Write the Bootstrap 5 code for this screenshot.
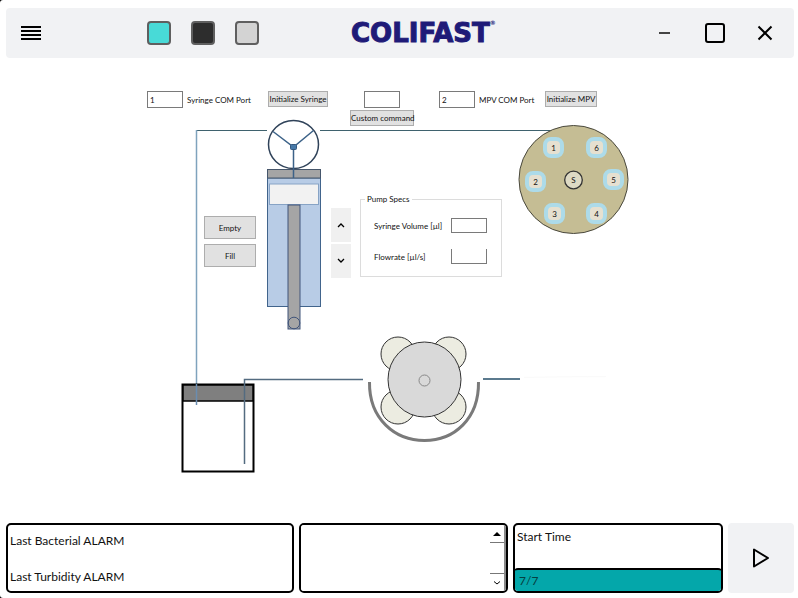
<!DOCTYPE html>
<html lang="en">
<head>
<meta charset="utf-8">
<meta name="viewport" content="width=device-width, initial-scale=1">
<title>Colifast</title>
<link href="https://cdn.jsdelivr.net/npm/bootstrap@5.3.0/dist/css/bootstrap.min.css" rel="stylesheet">
<style>
body { background: #000; font-family: Lato, "Open Sans", sans-serif; font-size: 12px; line-height: 16px; color: #111; }
.app-shell { background: #fff; border-radius: 3px 0 0 3px; padding: 8px 4px 5px 6px; }
.titlebar { background: #f1f2f4; border-radius: 4px; height: 50px; padding: 0 21px 0 15px; }
.bare { border: 0; background: none; padding: 0; display: flex; align-items: center; justify-content: center; color: #000; }
.swatches { gap: 20px; margin-left: 106px; }
.swatch { width: 24px; height: 24px; border: 2px solid #5f5f5f; border-radius: 4px; padding: 0; }
.swatch-teal { background: #48dad7; }
.swatch-dark { background: #2d2d2d; }
.swatch-light { background: #d3d3d3; }
.brand { margin-left: 92px; color: #1f1b78; font: bold 26px/30px "DejaVu Sans", sans-serif; -webkit-text-stroke: 1px #1f1b78; }
.brand sup { font-size: 6px; top: -17px; -webkit-text-stroke: 0; }
.win-controls { gap: 32px; }
.stage { width: 504px; height: 424px; left: -1px; font-family: Lato, sans-serif; font-size: 8px; line-height: 10px; }
.ports { display: grid; grid-template-columns: 121px 82px 89px 106px auto; align-items: start; padding-top: 33px; }
.tiny-input { width: 36px; height: 17px; border: 1px solid #7a7a7a; border-radius: 0; padding: 0 2px; font-size: 8px; background: #fff; color: #111; }
.tiny-btn { border: 1px solid #adadad; background: #e1e1e1; padding: 0; font-size: 8px; line-height: 10px; height: 16px; color: #111; white-space: nowrap; }
.w-mpv { width: 52px; }
.w-syr { width: 60px; }
.w-cmd { width: 64px; margin-top: 2px; }
.port-label { margin-left: 4px; white-space: nowrap; }
.cmd-cell { width: 64px; }
.move-btns { left: 57px; top: 158px; width: 52px; gap: 5px; }
.move-btns .tiny-btn { height: 23px; }
.step-btns { left: 184px; top: 150px; width: 20px; gap: 2px; }
.step-btns button { height: 34px; background: #f0f0f0; }
.specs { left: 213px; top: 136px; width: 142px; }
.specs legend { float: none; width: auto; font-size: 8px; line-height: 10px; margin: 0 0 0 -9px; padding: 0 2px; }
.specs fieldset { border: 1px solid #dcdcdc; padding: 14px 14px 12px 13px; min-width: 0; }
.specs .spec-rows { gap: 16px; }
.specs .tiny-input { height: 15px; }
.valve-port { width: 21px; height: 21px; border: 4px solid #addbe9; border-radius: 8px; background: #e6e0d0; font-size: 8px; line-height: 10px; padding: 0; color: #111; }
.vp1 { left: 396px; top: 79px; } .vp6 { left: 439px; top: 79px; }
.vp2 { left: 378px; top: 113px; } .vp5 { left: 456px; top: 111px; }
.vp3 { left: 397px; top: 145px; } .vp4 { left: 439px; top: 145px; }
.status { gap: 5px; height: 70px; }
.panel { border: 2px solid #000; border-radius: 5px; background: #fff; overflow: hidden; min-width: 0; }
.panel-alarm { flex: 280 1 0; padding: 8px 2px 6px; }
.panel-log { flex: 205 1 0; }
.panel-start { flex: 206 1 0; }
.log-text { border: 0; resize: none; outline: 0; min-width: 0; overflow: hidden; }
.log-scroll { width: 16px; border-right: 2px solid #8a8a8a; }
.log-scroll .bare { height: 17px; }
.log-track { border-top: 1px solid #777; border-bottom: 1px solid #777; }
.start-label { padding: 4px 2px; }
.start-bar { background: #04a7aa; border-top: 2px solid #000; border-radius: 4px 4px 0 0; height: 23px; padding: 3px 5px; color: #063f41; margin: 0 -1px; }
.play { width: 66px; flex-shrink: 0; background: #f1f2f4; border-radius: 4px; }
</style>
<script src="https://cdn.jsdelivr.net/npm/bootstrap@5.3.0/dist/js/bootstrap.bundle.min.js"></script>
</head>
<body>
<div class="app-shell d-flex flex-column min-vh-100">
  <header class="titlebar d-flex align-items-center">
    <button class="bare" aria-label="Menu"><svg width="20" height="14"><path d="M0 1H20M0 5H20M0 9H20M0 13H20" stroke="#000" stroke-width="2"/></svg></button>
    <div class="swatches d-flex">
      <button class="swatch swatch-teal" aria-label="Teal theme"></button>
      <button class="swatch swatch-dark" aria-label="Dark theme"></button>
      <button class="swatch swatch-light" aria-label="Light theme"></button>
    </div>
    <div class="brand">COLIFAST<sup>®</sup></div>
    <div class="win-controls d-flex align-items-center ms-auto">
      <button class="bare" aria-label="Minimize"><svg width="16" height="20"><path d="M2 10H13" stroke="#444" stroke-width="2"/></svg></button>
      <button class="bare" aria-label="Maximize"><svg width="20" height="20"><rect x="1" y="1" width="18" height="18" rx="2" fill="none" stroke="#000" stroke-width="2"/></svg></button>
      <button class="bare" aria-label="Close"><svg width="16" height="16"><path d="M1.500 1.500L14.500 14.500M14.500 1.500L1.500 14.500" stroke="#000" stroke-width="2"/></svg></button>
    </div>
  </header>

  <main class="flex-grow-1">
    <div class="stage position-relative mx-auto">
      <svg class="position-absolute top-0 start-0" width="504" height="424" viewBox="147 58 504 424" fill="none">
        <!-- tubing -->
        <path d="M196 130.500H267M320 130.500H552" stroke="#3f626e"/>
        <path d="M196.500 130V384" stroke="#7fa3bd" stroke-width="1.500"/>
        <!-- syringe -->
        <rect x="267.500" y="178" width="53" height="128.500" fill="#b8cce6" stroke="#41648c"/>
        <rect x="267.500" y="169.500" width="53" height="8.500" fill="#a5a5a5" stroke="#46566b"/>
        <rect x="269.500" y="184" width="49" height="20.500" fill="#f2f2f2" stroke="#87a3c5"/>
        <rect x="288" y="205" width="12" height="124" fill="#a5a5a5" stroke="#41557a"/>
        <circle cx="294" cy="323" r="5.800" stroke="#41557a"/>
        <ellipse cx="293.500" cy="144.500" rx="25" ry="24" fill="#fff" stroke="#2f4259" stroke-width="1.500"/>
        <path d="M273 131.500L293.500 147L313.500 130.500M293.500 147V178" stroke="#3c6288" stroke-width="1.500"/>
        <rect x="290.500" y="144.500" width="6" height="5" rx="1" fill="#4779a8" stroke="#34587e"/>
        <!-- selector valve -->
        <ellipse cx="573.500" cy="179.500" rx="54.500" ry="54" fill="#c5bd94" stroke="#4a493e"/>
        <circle cx="573.500" cy="180" r="8.800" fill="#dedac4" stroke="#333" stroke-width="1.300"/>
        <text x="573.500" y="183" fill="#111" font-size="8" text-anchor="middle">S</text>
        <!-- peristaltic pump -->
        <g fill="#ecece1" stroke="#333">
          <circle cx="398" cy="354" r="17"/><circle cx="449" cy="354" r="17"/>
          <circle cx="398" cy="407" r="17"/><circle cx="449" cy="407" r="17"/>
        </g>
        <ellipse cx="424.500" cy="379.500" rx="36.500" ry="37.500" fill="#d9d9d9" stroke="#333"/>
        <circle cx="424.500" cy="380.500" r="5.500" stroke="#888"/>
        <path d="M369.500 382C369 419 395 440.500 424.500 440.500S479 419 478.500 382" stroke="#7a7a7a" stroke-width="3"/>
        <path d="M483 379H520" stroke="#5b7a8e" stroke-width="2"/>
        <path d="M524 377.500Q570 376.500 606 376.500" stroke="#fafafa"/>
        <!-- sample bottle -->
        <rect x="182.500" y="384.500" width="71" height="87" fill="#fff" stroke="#000" stroke-width="2"/>
        <rect x="183" y="385" width="70" height="16" fill="#7f7f7f" stroke="#000" stroke-width="1.500"/>
        <path d="M196.500 384V405" stroke="#6a8db0" stroke-width="1.500"/>
        <path d="M244.500 464V379.500H363" stroke="#536b80" stroke-width="1.500"/>
      </svg>

      <div class="ports position-relative">
        <div class="d-flex align-items-center">
          <input class="tiny-input" id="syrPort" value="1">
          <label class="port-label" for="syrPort">Syringe COM Port</label>
        </div>
        <button class="tiny-btn w-syr">Initialize Syringe</button>
        <div class="cmd-cell d-flex flex-column align-items-center">
          <input class="tiny-input" aria-label="Custom command">
          <button class="tiny-btn w-cmd">Custom command</button>
        </div>
        <div class="d-flex align-items-center">
          <input class="tiny-input" id="mpvPort" value="2">
          <label class="port-label" for="mpvPort">MPV COM Port</label>
        </div>
        <button class="tiny-btn w-mpv">Initialize MPV</button>
      </div>

      <div class="move-btns position-absolute d-flex flex-column">
        <button class="tiny-btn">Empty</button>
        <button class="tiny-btn">Fill</button>
      </div>
      <div class="step-btns position-absolute d-flex flex-column">
        <button class="bare" aria-label="Up"><svg width="8" height="6"><path d="M1 5L4 2L7 5" fill="none" stroke="#000" stroke-width="1.300"/></svg></button>
        <button class="bare" aria-label="Down"><svg width="8" height="6"><path d="M1 1L4 4L7 1" fill="none" stroke="#000" stroke-width="1.300"/></svg></button>
      </div>
      <div class="specs position-absolute">
        <fieldset>
          <legend>Pump Specs</legend>
          <div class="spec-rows d-flex flex-column">
            <div class="d-flex align-items-center justify-content-between"><label for="vol">Syringe Volume [µl]</label><input class="tiny-input" id="vol"></div>
            <div class="d-flex align-items-center justify-content-between"><label for="flow">Flowrate [µl/s]</label><input class="tiny-input border-top-0" id="flow"></div>
          </div>
        </fieldset>
      </div>
      <button class="valve-port vp1 position-absolute">1</button>
      <button class="valve-port vp2 position-absolute">2</button>
      <button class="valve-port vp3 position-absolute">3</button>
      <button class="valve-port vp4 position-absolute">4</button>
      <button class="valve-port vp5 position-absolute">5</button>
      <button class="valve-port vp6 position-absolute">6</button>
    </div>
  </main>

  <footer class="status d-flex">
    <section class="panel panel-alarm d-flex flex-column justify-content-between">
      <div>Last Bacterial ALARM</div>
      <div>Last Turbidity ALARM</div>
    </section>
    <section class="panel panel-log d-flex">
      <textarea class="log-text flex-grow-1" aria-label="Log"></textarea>
      <div class="log-scroll d-flex flex-column">
        <button class="bare" aria-label="Scroll up"><svg width="8" height="4"><path d="M0 4L4 0L8 4Z"/></svg></button>
        <div class="log-track flex-grow-1"></div>
        <button class="bare" aria-label="Scroll down"><svg width="6" height="4"><path d="M0 .5L3 3L6 .5" fill="none" stroke="#000"/></svg></button>
      </div>
    </section>
    <section class="panel panel-start d-flex flex-column justify-content-between">
      <div class="start-label">Start Time</div>
      <div class="start-bar">7/7</div>
    </section>
    <button class="bare play" aria-label="Start"><svg width="18" height="20"><path d="M2 1.500V18.500L16 10Z" fill="none" stroke="#000" stroke-width="2" stroke-linejoin="round"/></svg></button>
  </footer>
</div>
</body>
</html>
